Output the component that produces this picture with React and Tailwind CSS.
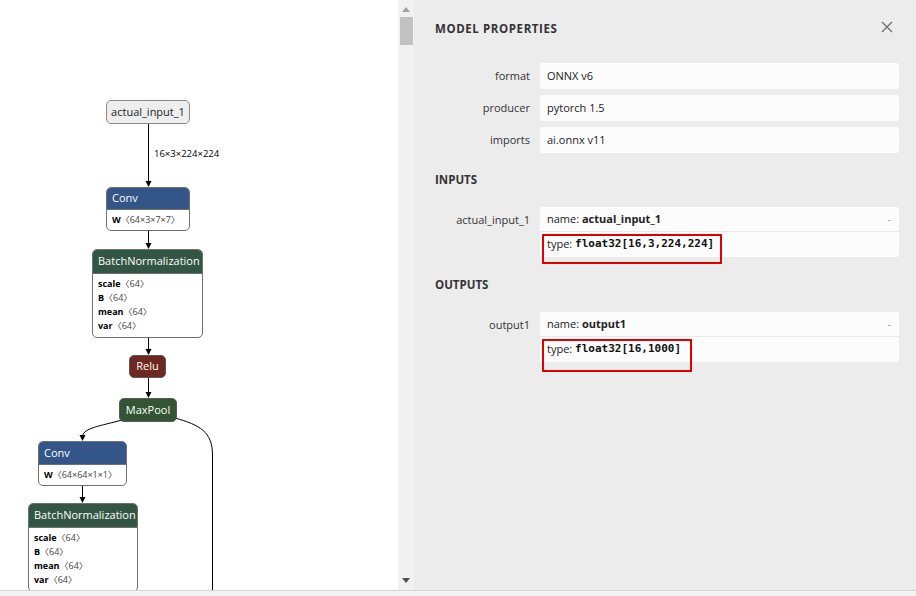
import React from "react";

const F = "font-['Open_Sans','Noto_Sans_CJK_SC',sans-serif]";

function Node({ x, y, w, title, color, rows, headerH = 22, bodyRowH = 14, bodyPad = 4 }) {
  return (
    <div
      className={`absolute rounded-[5px] border border-[#707070] overflow-hidden bg-white ${F}`}
      style={{ left: x, top: y, width: w }}
    >
      <div
        className="text-white text-[11px] pl-[5px] flex items-center"
        style={{ background: color, height: headerH }}
      >
        {title}
      </div>
      <div className="border-t border-[#707070]" style={{ paddingTop: bodyPad - 1, paddingBottom: bodyPad }}>
        {rows.map(([k, v], i) => (
          <div key={i} className="flex items-center pl-[5px] text-[9px] text-black" style={{ height: bodyRowH }}>
            <span className="font-bold">{k}</span>
            <span className="text-[#444]">{v}</span>
          </div>
        ))}
      </div>
    </div>
  );
}

function SmallNode({ x, y, w, h, title, color, textColor = "text-white", border = "border-[#707070]" }) {
  return (
    <div
      className={`absolute rounded-[5px] border ${border} flex items-center justify-center text-[11px] ${textColor} ${F}`}
      style={{ left: x, top: y, width: w, height: h, background: color }}
    >
      {title}
    </div>
  );
}

function Graph() {
  return (
    <div className="relative w-[398px] h-full bg-white overflow-hidden">
      <svg className="absolute left-0 top-0" width="398" height="590">
        <g stroke="#000" strokeWidth="1" fill="none">
          <path d="M148.5 123 V182" />
          <path d="M148.5 230 V244" />
          <path d="M148.5 335 V350" />
          <path d="M148.5 377 V393" />
          <path d="M122 420 C100 426 84 428 82.5 436" />
          <path d="M175 418 C200 425 212.5 432 212.5 455 V590" />
          <path d="M82.5 483 V498" />
        </g>
        <g fill="#000">
          <polygon points="145.5,181 151.5,181 148.5,187" />
          <polygon points="145.5,243 151.5,243 148.5,249" />
          <polygon points="145.5,349 151.5,349 148.5,355" />
          <polygon points="145.5,392 151.5,392 148.5,398" />
          <polygon points="79.5,435 85.5,435 82.5,441" />
          <polygon points="79.5,497 85.5,497 82.5,503" />
        </g>
      </svg>
      <div className={`absolute left-[154px] top-[147px] text-[9.5px] text-black ${F}`}>16×3×224×224</div>

      <SmallNode x={106} y={100} w={84} h={24} title="actual_input_1" color="#eeeeee" textColor="text-[#222]" border="border-[#8a8a8a]" />
      <Node x={106} y={187} w={84} title="Conv" color="#335588" rows={[["W", "〈64×3×7×7〉"]]} headerH={21} bodyRowH={13} bodyPad={4} />
      <Node
        x={92}
        y={249}
        w={111}
        title="BatchNormalization"
        color="#335544"
        headerH={23}
        rows={[["scale", "〈64〉"], ["B", "〈64〉"], ["mean", "〈64〉"], ["var", "〈64〉"]]}
        bodyPad={4}
      />
      <SmallNode x={129} y={355} w={37} h={23} title="Relu" color="#6e2820" border="border-[#5a5a5a]" />
      <SmallNode x={119} y={398} w={58} h={24} title="MaxPool" color="#335533" border="border-[#5a5a5a]" />
      <Node x={38} y={441} w={89} title="Conv" color="#335588" rows={[["W", "〈64×64×1×1〉"]]} headerH={22} bodyRowH={13} bodyPad={4} />
      <Node
        x={28}
        y={503}
        w={110}
        title="BatchNormalization"
        color="#335544"
        headerH={23}
        rows={[["scale", "〈64〉"], ["B", "〈64〉"], ["mean", "〈64〉"], ["var", "〈64〉"]]}
        bodyPad={4}
      />
    </div>
  );
}

function Scrollbar() {
  return (
    <div className="relative w-[16px] h-full bg-[#f1f1f1] flex flex-col items-center">
      <svg width="8" height="5" className="mt-[7px]">
        <polygon points="0,5 8,5 4,0" fill="#a3a3a3" />
      </svg>
      <div className="mt-[5px] w-[13px] h-[28px] bg-[#c1c1c1]" />
      <div className="flex-1" />
      <svg width="8" height="5" className="mb-[7px]">
        <polygon points="0,0 8,0 4,5" fill="#505050" />
      </svg>
    </div>
  );
}

function PropRow({ label, value }) {
  return (
    <div className="flex h-[26px]">
      <div className="w-[95px] text-right text-[11px] text-[#333] leading-[26px]">{label}</div>
      <div className="ml-[10px] w-[359px] bg-[#fcfcfc] rounded-[2px] text-[11px] text-[#222] pl-[7px] leading-[26px]">
        {value}
      </div>
    </div>
  );
}

function ArgRow({ label, name, type, redW, redH }) {
  return (
    <div className="flex">
      <div className="w-[95px] text-right text-[11px] text-[#333] leading-[25px]">{label}</div>
      <div className="relative ml-[10px] w-[359px] bg-[#fcfcfc] rounded-[2px]">
        <div className="h-[25px] flex items-center pl-[7px] pr-[8px] text-[11px] text-[#222] border-b border-[#eaeaea]">
          <span>name:&nbsp;</span>
          <span className="font-bold">{name}</span>
          <span className="ml-auto text-[#999]">-</span>
        </div>
        <div className="h-[25px] flex items-center pl-[7px] text-[11px] text-[#222]">
          <span>type:&nbsp;</span>
          <span className="font-bold font-['DejaVu_Sans_Mono',monospace] text-[11px] text-[#111]">{type}</span>
        </div>
        <div
          className="absolute left-[2px] top-[27px] border-2 border-[#e00000]"
          style={{ width: redW, height: redH }}
        />
      </div>
    </div>
  );
}

function Panel() {
  return (
    <div className={`flex-1 h-full bg-[#ececec] pl-[21px] pt-[21px] ${F}`}>
      <div className="relative h-[16px] flex items-center">
        <div className="text-[11.5px] font-bold text-[#333] tracking-[0.6px]">MODEL PROPERTIES</div>
        <svg className="absolute left-[446px] top-[0px]" width="12" height="12" viewBox="0 0 12 12">
          <path d="M1 1 L11 11 M11 1 L1 11" stroke="#707070" strokeWidth="1.4" />
        </svg>
      </div>
      <div className="mt-[26px] flex flex-col gap-[6px]">
        <PropRow label="format" value="ONNX v6" />
        <PropRow label="producer" value="pytorch 1.5" />
        <PropRow label="imports" value="ai.onnx v11" />
      </div>
      <div className="mt-[19px] h-[16px] flex items-center text-[11.5px] font-bold text-[#333]">INPUTS</div>
      <div className="mt-[19px]">
        <ArgRow label="actual_input_1" name="actual_input_1" type="float32[16,3,224,224]" redW={180} redH={30} />
      </div>
      <div className="mt-[20px] h-[16px] flex items-center text-[11.5px] font-bold text-[#333]">OUTPUTS</div>
      <div className="mt-[19px]">
        <ArgRow label="output1" name="output1" type="float32[16,1000]" redW={150} redH={33} />
      </div>
    </div>
  );
}

export default function App() {
  return (
    <div className="w-[916px] h-[596px] overflow-hidden bg-white">
      <div className="flex h-[590px]">
        <Graph />
        <Scrollbar />
        <Panel />
      </div>
      <div className="h-[6px] border-t border-[#d6d6d6] bg-[#f3f3f3]" />
    </div>
  );
}
